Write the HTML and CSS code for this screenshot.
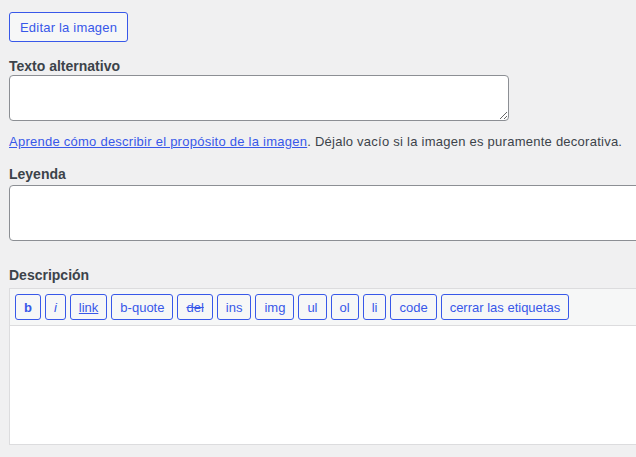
FILE: index.html
```html
<!DOCTYPE html>
<html lang="es">
<head>
<meta charset="utf-8">
<title>Editar medio</title>
<link rel="stylesheet" href="styles.css">
</head>
<body>
<div class="page">
  <div class="edit-row">
    <button class="button" type="button">Editar la imagen</button>
  </div>

  <div class="field alt-field">
    <label class="label" for="alt">Texto alternativo</label>
    <textarea id="alt" class="alt"></textarea>
    <p class="help"><a href="#">Aprende cómo describir el propósito de la imagen</a>. Déjalo vacío si la imagen es puramente decorativa.</p>
  </div>

  <div class="field caption-field">
    <label class="label" for="caption">Leyenda</label>
    <textarea id="caption" class="caption"></textarea>
  </div>

  <div class="field desc-field">
    <label class="label" for="content">Descripción</label>
    <div class="editor">
      <div class="toolbar">
        <button class="qt qt-b" type="button">b</button>
        <button class="qt qt-i" type="button">i</button>
        <button class="qt qt-link" type="button">link</button>
        <button class="qt" type="button">b-quote</button>
        <button class="qt qt-del" type="button">del</button>
        <button class="qt" type="button">ins</button>
        <button class="qt" type="button">img</button>
        <button class="qt" type="button">ul</button>
        <button class="qt" type="button">ol</button>
        <button class="qt" type="button">li</button>
        <button class="qt" type="button">code</button>
        <button class="qt" type="button">cerrar las etiquetas</button>
      </div>
      <textarea id="content" class="content"></textarea>
    </div>
  </div>
</div>
</body>
</html>
```

FILE: styles.css
```css
html, body {
  margin: 0;
  padding: 0;
  background: #f0f0f1;
  overflow: hidden;
}

body {
  font-family: "Liberation Sans", Arial, sans-serif;
  font-size: 13px;
  color: #3c434a;
}

.page {
  padding: 12px 0 0 9px;
  width: 700px;
}

.edit-row {
  display: flex;
}

.button {
  font-family: inherit;
  font-size: 13px;
  letter-spacing: 0.2px;
  height: 30px;
  padding: 0 10px;
  background: #f6f7f7;
  color: #3858e9;
  border: 1px solid #3858e9;
  border-radius: 3px;
  cursor: pointer;
}

.label {
  display: block;
  font-weight: bold;
  font-size: 14px;
  line-height: 18px;
  color: #3c434a;
}

.alt-field {
  margin-top: 15px;
}

textarea {
  display: block;
  box-sizing: border-box;
  font-family: inherit;
  background: #fff;
  border: 1px solid #8c8f94;
  border-radius: 4px;
  margin: 0;
}

.alt {
  width: 500px;
  height: 46px;
}

.help {
  margin: 12px 0 0;
  line-height: 18px;
  font-size: 13px;
  letter-spacing: 0.25px;
  color: #3c434a;
}

.help a {
  color: #3858e9;
  text-decoration: underline;
}

.caption-field {
  margin-top: 14px;
}

.caption {
  width: 680px;
  height: 56px;
  margin-top: 2px;
  resize: none;
}

.desc-field {
  margin-top: 25px;
}

.editor {
  margin-top: 4px;
  width: 680px;
  border: 1px solid #dcdcde;
  background: #fff;
}

.toolbar {
  display: flex;
  gap: 4px;
  padding: 5px 5px 5px;
  background: #f6f7f7;
  border-bottom: 1px solid #dcdcde;
}

.qt {
  font-family: inherit;
  font-size: 13px;
  height: 26px;
  padding: 0 8px;
  background: #f6f7f7;
  color: #3858e9;
  border: 1px solid #3858e9;
  border-radius: 3px;
  cursor: pointer;
}

.qt-b { font-weight: bold; }
.qt-i { font-style: italic; }
.qt-link { text-decoration: underline; }
.qt-del { text-decoration: line-through; }

.content {
  width: 100%;
  height: 118px;
  border: 0;
  border-radius: 0;
  resize: none;
}
```
